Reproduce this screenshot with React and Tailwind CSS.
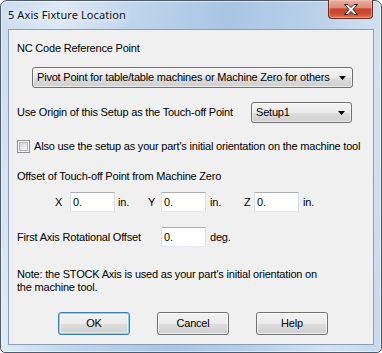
const ui = "font-['Liberation_Sans',Arial,sans-serif] text-[11px] leading-[13px] tracking-[-0.2px] text-black";

function Arrow() {
  return (
    <svg width="7" height="4" viewBox="0 0 7 4" className="shrink-0">
      <polygon points="0,0 7,0 3.5,4" fill="#000" />
    </svg>
  );
}

function Combo({ text, className }) {
  return (
    <div
      className={`flex h-[21px] items-center justify-between rounded-[3px] border border-[#707070] bg-[linear-gradient(to_bottom,#f2f2f2_0%,#ebebeb_50%,#dddddd_51%,#cfcfcf_100%)] pl-[4px] pr-[6px] shadow-[inset_0_0_0_1px_rgba(255,255,255,0.6)] ${className}`}
    >
      <span className="whitespace-nowrap">{text}</span>
      <Arrow />
    </div>
  );
}

function Field({ value = "0.", className = "" }) {
  return (
    <div
      className={`flex h-[20px] w-[45px] items-center border border-[#abadb3] border-l-[#dbdfe6] border-r-[#dbdfe6] border-b-[#e3e9ef] bg-white pl-[2px] ${className}`}
    >
      {value}
    </div>
  );
}

function Button({ label, primary }) {
  return (
    <div
      className={`flex h-[23px] w-[72px] items-center justify-center rounded-[3px] border bg-[linear-gradient(to_bottom,#f2f2f2_0%,#ebebeb_50%,#dddddd_51%,#cfcfcf_100%)] ${
        primary
          ? "border-[#3c7fb1] shadow-[inset_0_0_0_1px_#7fd3f7,inset_0_0_0_2px_rgba(255,255,255,0.5)]"
          : "border-[#707070] shadow-[inset_0_0_0_1px_rgba(255,255,255,0.7)]"
      }`}
    >
      {label}
    </div>
  );
}

export default function App() {
  return (
    <div className="h-[353px] w-[382px] bg-white">
      <div className="flex h-[353px] w-[382px] flex-col rounded-t-[7px] rounded-b-[5px] border border-[#4f5b69] bg-[linear-gradient(100deg,#cadcf0_0%,#dde9f6_14%,#bfd5ec_30%,#a9c5e4_52%,#b7cfe9_70%,#d3e2f2_88%,#c6d9ee_100%)] shadow-[inset_0_0_0_1px_rgba(255,255,255,0.55)]">
        {/* title bar */}
        <div className="flex h-[28px] items-start justify-between pl-[7px] pr-[8px]">
          <span className="mt-[6px] font-['Noto_Sans',sans-serif] text-[11px] leading-[16px] tracking-[0.1px] text-[#111] [text-shadow:0_0_6px_#fff,0_0_10px_#fff]">
            5 Axis Fixture Location
          </span>
          <div className="-mt-[1px] flex h-[19px] w-[45px] items-center justify-center rounded-b-[4px] border border-t-0 border-[#6a2a20] bg-[linear-gradient(to_bottom,#eab0a2_0%,#dc8d7b_42%,#c8462c_50%,#c94a2f_75%,#df7656_100%)] shadow-[inset_0_0_0_1px_rgba(255,210,200,0.45)]">
            <svg width="14" height="11" viewBox="0 0 14 11">
              <polygon
                points="0.5,0.5 4,0.5 7,3.5 10,0.5 13.5,0.5 9,5.5 13.5,10.5 10,10.5 7,7.5 4,10.5 0.5,10.5 5,5.5"
                fill="#fff"
                stroke="#3d1a14"
                strokeWidth="1"
                strokeLinejoin="round"
              />
            </svg>
          </div>
        </div>

        {/* client area */}
        <div className={`mx-[7px] flex h-[316px] flex-col border border-[#8b9db3] bg-[#f0f0f0] pl-[8px] ${ui}`}>
          <div className="mt-[12px]">NC Code Reference Point</div>

          <Combo
            className="ml-[15px] mt-[12px] w-[321px]"
            text="Pivot Point for table/table machines or Machine Zero for others"
          />

          <div className="mt-[14px] flex h-[21px] items-center">
            <span className="whitespace-nowrap">Use Origin of this Setup as the Touch-off Point</span>
            <Combo className="ml-auto mr-[21px] w-[101px] pl-[3px]" text="Setup1" />
          </div>

          <div className="mt-[17px] flex h-[13px] items-center">
            <div className="h-[13px] w-[13px] border border-[#8f8f8f] bg-[#f4f4f4] p-[1px]">
              <div className="h-full w-full border border-[#b3b6ba] bg-[linear-gradient(135deg,#cdd1d6_0%,#e6e8ea_60%,#f8f8f8_100%)]" />
            </div>
            <span className="ml-[4px] whitespace-nowrap">
              Also use the setup as your part's initial orientation on the machine tool
            </span>
          </div>

          <div className="mt-[17px]">Offset of Touch-off Point from Machine Zero</div>

          <div className="mt-[9px] flex h-[20px] items-center">
            <span className="ml-[38px] w-[15px]">X</span>
            <Field />
            <span className="ml-[3px] w-[30px]">in.</span>
            <span className="w-[13px]">Y</span>
            <Field />
            <span className="ml-[4px] w-[34px]">in.</span>
            <span className="w-[10px]">Z</span>
            <Field />
            <span className="ml-[4px]">in.</span>
          </div>

          <div className="mt-[15px] flex h-[20px] items-center">
            <span className="w-[144px] whitespace-nowrap">First Axis Rotational Offset</span>
            <Field />
            <span className="ml-[4px]">deg.</span>
          </div>

          <div className="mt-[21px]">
            Note: the STOCK Axis is used as your part's initial orientation on
            <br />
            the machine tool.
          </div>

          <div className="ml-[41px] mt-[18px] flex gap-[27px]">
            <Button label="OK" primary />
            <Button label="Cancel" />
            <Button label="Help" />
          </div>
        </div>
      </div>
    </div>
  );
}
